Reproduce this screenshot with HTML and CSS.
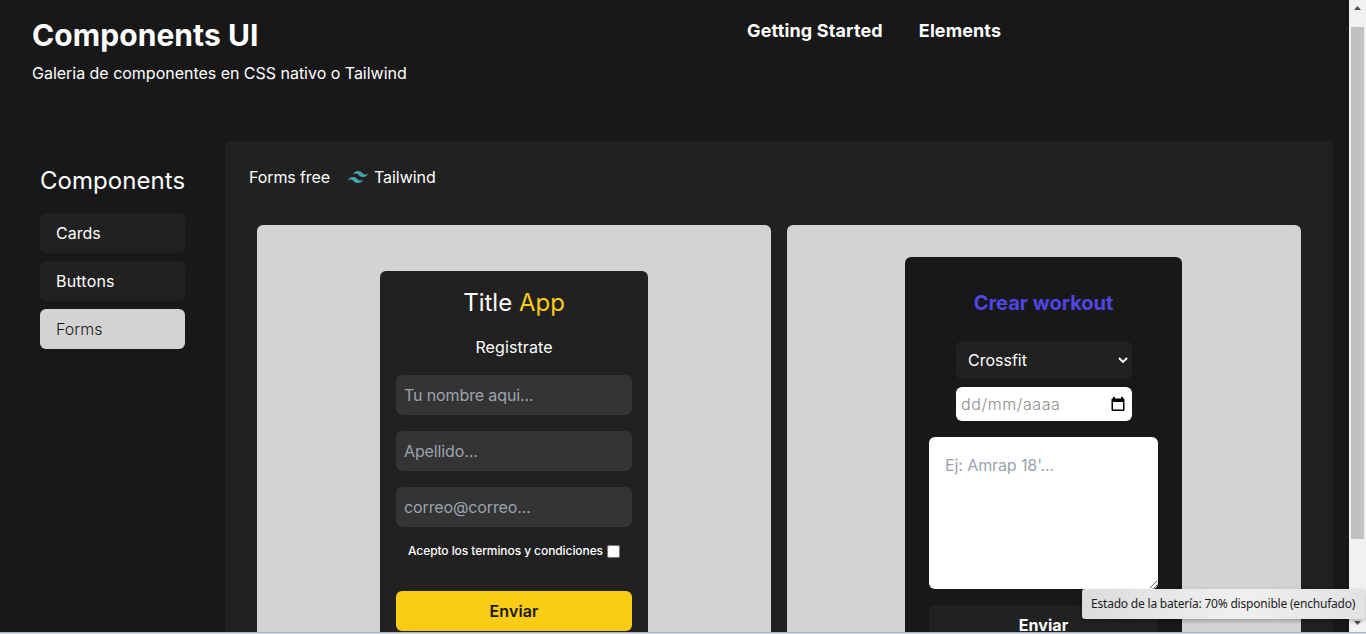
FILE: index.html
```html
<!DOCTYPE html>
<html lang="es">
<head>
<meta charset="utf-8">
<title>Components UI</title>
<link rel="stylesheet" href="styles.css">
</head>
<body>
<div class="window">
  <div class="page">
    <header class="header">
      <div class="brand">
        <h1>Components UI</h1>
        <p>Galeria de componentes en CSS nativo o Tailwind</p>
      </div>
      <nav class="nav"><a class="nav-start">Getting Started</a><a class="nav-elements">Elements</a></nav>
    </header>
    <div class="layout">
      <aside class="sidebar">
        <h2>Components</h2>
        <a class="item">Cards</a>
        <a class="item buttons">Buttons</a>
        <a class="item active">Forms</a>
      </aside>
      <main class="panel">
        <div class="panel-title">
          <span class="free">Forms free</span>
          <svg class="tw" viewBox="0 0 24 24"><path fill="#44a8b3" d="M12 6c-2.67 0-4.33 1.33-5 4 1-1.33 2.17-1.83 3.5-1.5.76.19 1.31.74 1.91 1.35.98 1 2.09 2.15 4.59 2.15 2.67 0 4.33-1.33 5-4-1 1.33-2.17 1.83-3.5 1.5-.76-.19-1.3-.74-1.91-1.35C15.61 7.15 14.5 6 12 6m-5 6c-2.67 0-4.33 1.33-5 4 1-1.33 2.17-1.83 3.5-1.5.76.19 1.3.74 1.91 1.35C8.39 16.85 9.5 18 12 18c2.67 0 4.33-1.33 5-4-1 1.33-2.17 1.83-3.5 1.5-.76-.19-1.3-.74-1.91-1.35C10.61 13.15 9.5 12 7 12"/></svg>
          <span class="tw-label">Tailwind</span>
        </div>
        <div class="previews">
          <section class="preview">
            <form class="register">
              <h3>Title <span>App</span></h3>
              <p>Registrate</p>
              <input class="field" placeholder="Tu nombre aqui...">
              <input class="field" placeholder="Apellido...">
              <input class="field" placeholder="correo@correo...">
              <label class="terms"><span>Acepto los terminos y condiciones</span><input type="checkbox"></label>
              <button class="send" type="button">Enviar</button>
            </form>
          </section>
          <section class="preview">
            <form class="workout">
              <h3>Crear workout</h3>
              <div class="select"><span>Crossfit</span>
                <svg width="10" height="6" viewBox="0 0 10 6"><path d="M1 1l4 4 4-4" fill="none" stroke="#fff" stroke-width="2"/></svg>
              </div>
              <div class="date"><span>dd/mm/aaaa</span>
                <svg width="14" height="15" viewBox="0 0 14 15"><path fill="#000" fill-rule="evenodd" d="M2 0h2v1.500h6V0h2v1.500h.5Q13.500 1.500 13.500 2.500v10.500Q13.500 14 12.500 14h-11Q.5 14 .5 13V2.500Q.5 1.500 1.500 1.500H2zM2 5v7.600h10V5z"/></svg>
              </div>
              <textarea placeholder="Ej: Amrap 18'..."></textarea>
              <button class="submit" type="button">Enviar</button>
            </form>
          </section>
        </div>
      </main>
    </div>
  </div>
  <div class="scrollbar">
    <svg width="7" height="4" viewBox="0 0 7 4"><path d="M0 4L3.500 0 7 4z" fill="#505050"/></svg>
    <div class="thumb"></div>
    <svg class="down" width="7" height="4" viewBox="0 0 7 4"><path d="M0 0h7L3.500 4z" fill="#505050"/></svg>
  </div>
  <div class="edge"></div>
  <div class="tooltip">Estado de la batería: 70% disponible (enchufado)</div>
</div>
</body>
</html>
```
FILE: styles.css
```css
* { box-sizing: border-box; margin: 0; padding: 0; }
body { font: 400 16px/24px Inter, sans-serif; color: #fff; background: #181818; overflow: hidden; }
button, input, textarea { font: inherit; border: 0; outline: 0; display: block; }
.window { position: relative; display: grid; grid-template-columns: 1349px 17px; grid-template-rows: 632px 2px; height: 634px; overflow: hidden; }
.page { overflow: hidden; background: #181818; }
.header { display: flex; height: 141px; padding: 17px 32px 0; }
.brand { width: 715px; }
h1 { font-size: 30px; line-height: 36px; font-weight: 700; letter-spacing: 0.07px; }
.brand p { margin-top: 8px; letter-spacing: -0.02px; }
.nav { display: flex; gap: 36px; font-size: 18px; line-height: 28px; font-weight: 700; }
.nav-start { letter-spacing: 0.15px; }
.nav-elements { letter-spacing: 0.1px; }
.layout { display: flex; }
.sidebar { display: flex; flex-direction: column; gap: 8px; width: 225px; padding: 24px 40px 0; }
h2 { font-size: 24px; line-height: 32px; font-weight: 400; margin-bottom: 8px; white-space: nowrap; letter-spacing: 0.05px; }
.item { height: 40px; padding: 8px 16px; border-radius: 6px; background: #212121; }
.item.buttons { letter-spacing: 0.2px; }
.item.active { background: #d3d3d3; color: #181818; font-weight: 300; }
.panel { width: 1108px; height: 620px; padding: 24px 32px; border-radius: 6px; background: #212121; }
.panel-title { display: flex; align-items: center; height: 24px; margin-left: -8px; }
.free { width: 97px; letter-spacing: -0.1px; }
.tw { width: 24px; height: 24px; }
.tw-label { margin-left: 4px; letter-spacing: -0.05px; }
.previews { display: grid; grid-template-columns: 514px 514px; gap: 16px; margin-top: 36px; }
.preview { display: flex; justify-content: center; align-items: flex-start; height: 500px; border-radius: 6px; background: #d3d3d3; }
.register { display: flex; flex-direction: column; align-items: center; width: 268px; height: 400px; margin-top: 46px; padding: 16px; border-radius: 6px; background: #212121; }
.register h3 { font-size: 24px; line-height: 32px; font-weight: 400; }
.register h3 span { color: #facc15; }
.register p { margin: 16px 0; letter-spacing: 0.1px; }
.field { width: 236px; height: 40px; margin-bottom: 16px; padding: 8px; border-radius: 6px; background: #343434; letter-spacing: -0.12px; }
.field::placeholder, textarea::placeholder { color: #9ca3af; opacity: 1; }
.terms { display: flex; align-items: center; gap: 4px; height: 16px; font-size: 12px; line-height: 16px; font-weight: 500; letter-spacing: -0.08px; white-space: nowrap; }
.terms input { width: 13px; height: 13px; }
.send { width: 236px; height: 40px; margin-top: 32px; border-radius: 6px; background: #facc15; color: #181818; font-weight: 600; letter-spacing: 0.1px; }
.workout { display: flex; flex-direction: column; align-items: center; width: 277px; height: 460px; margin: 32px 1px 0 0; padding: 32px 24px; border-radius: 6px; background: #181818; }
.workout h3 { font-size: 20px; line-height: 28px; font-weight: 700; color: #4f46e5; }
.select, .date { display: flex; align-items: center; justify-content: space-between; width: 176px; border-radius: 6px; margin-left: 1px; }
.select { height: 38px; margin-top: 24px; padding: 0 4px 0 12px; background: #212121; }
.date { height: 34px; margin-top: 8px; padding: 0 7px 0 5px; background: #fff; color: #8e8e8e; font-weight: 300; letter-spacing: 0.6px; }
textarea { width: 229px; height: 152px; margin-top: 16px; padding: 16px; border-radius: 6px; background: #fff; flex: none; letter-spacing: -0.1px; }
.submit { flex: none; width: 229px; height: 40px; margin-top: 16px; border-radius: 6px; background: #212121; color: #fff; font-weight: 700; letter-spacing: 0.1px; }
.scrollbar { display: flex; flex-direction: column; align-items: center; padding-top: 6px; background: #f1f1f1; }
.thumb { width: 13px; height: 512px; margin-top: 17px; background: #c1c1c1; }
.down { margin-top: 82px; }
.edge { grid-column: 1 / 3; border-top: 1px solid #a9afc4; background: #dde4f2; }
.tooltip { position: absolute; left: 1082px; top: 589px; width: 283px; height: 30px; padding-left: 9px; border-radius: 3px; background: linear-gradient(90deg, #dcdcdc, #f0f0f0 55%, #e2e2e2); box-shadow: 0 2px 4px #0004; color: #1c1c1c; font: 12px/30px "Noto Sans", sans-serif; letter-spacing: -0.2px; white-space: nowrap; }
```
